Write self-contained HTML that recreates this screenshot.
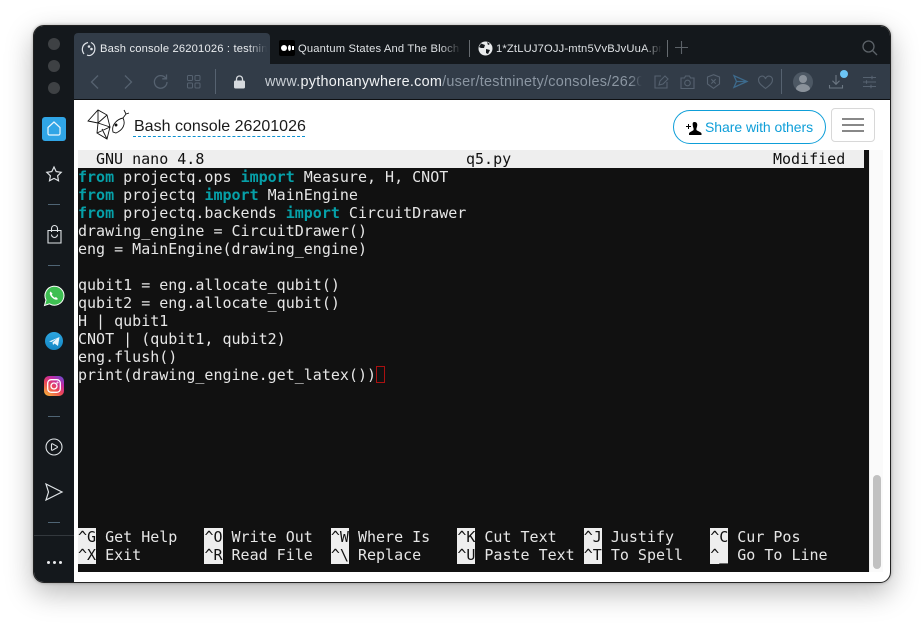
<!DOCTYPE html>
<html><head><meta charset="utf-8">
<style>
html,body{margin:0;padding:0;width:924px;height:624px;overflow:hidden;background:#fff;}
*{box-sizing:border-box;}
.abs,.t,.l{position:absolute;}
#win{position:absolute;left:33px;top:25px;width:858px;height:558px;border-radius:11px;background:#fff;overflow:hidden;box-shadow:0 10px 28px rgba(0,0,0,.28),0 0 3px rgba(0,0,0,.3);border:1px solid #222;}
.s{font-family:"Liberation Sans",sans-serif;white-space:nowrap;}
.tab{font-size:11.2px;line-height:16px;letter-spacing:.17px;overflow:hidden;}
#term{position:absolute;left:78px;top:150px;width:791px;height:422px;background:#111111;overflow:hidden;}
.l{left:0;font:15px/18px "DejaVu Sans Mono",monospace;color:#e6e6e6;white-space:pre;height:18px;}
.l b{color:#06a0a8;font-weight:bold;}
.l i{font-style:normal;background:#eeeeee;color:#111;}
svg{position:absolute;overflow:visible;}
</style></head><body>
<div id="win"></div>
<!-- sidebar -->
<div class="abs" style="left:34px;top:26px;width:40px;height:556px;background:#14181c;border-radius:10px 0 0 10px;"></div>
<div class="abs" style="left:34px;top:26px;width:856px;height:38px;background:#14181c;border-radius:10px 10px 0 0;"></div>
<div class="abs" style="left:48px;top:38px;width:12px;height:12px;border-radius:50%;background:#3e4144;"></div>
<div class="abs" style="left:48px;top:60px;width:12px;height:12px;border-radius:50%;background:#3e4144;"></div>
<div class="abs" style="left:48px;top:82px;width:12px;height:12px;border-radius:50%;background:#3e4144;"></div>
<!-- tab -->
<div class="abs" style="left:74px;top:33px;width:196px;height:31px;background:#323c48;border-radius:4px 4px 0 0;"></div>
<div class="abs" style="left:74px;top:64px;width:816px;height:35px;background:#323c48;"></div>
<div class="abs" style="left:74px;top:99px;width:816px;height:1px;background:#0d0f12;"></div>
<svg style="left:81px;top:41px" width="16" height="16" viewBox="0 0 16 16" fill="none" stroke="#dfe3e8" stroke-width="1.2"><path d="M3 13C0 9 1 3 7 1.500"/><path d="M10 1.500c5 2 5 9 1 12-2 1.500-4 1-5 .5"/><circle cx="8" cy="5.500" r=".7" fill="#dfe3e8"/><circle cx="10.500" cy="8" r=".7" fill="#dfe3e8"/></svg>
<div class="abs s tab" style="left:100px;top:41px;width:168px;color:#e9ecef;-webkit-mask-image:linear-gradient(90deg,#000 148px,transparent 167px);">Bash console 26201026 : testninety</div>
<div class="abs" style="left:279px;top:40px;width:16px;height:16px;background:#000;border-radius:2px;"></div>
<div class="abs" style="left:281px;top:45px;width:6px;height:6px;background:#fff;border-radius:50%;"></div>
<div class="abs" style="left:288px;top:45px;width:3px;height:6px;background:#fff;border-radius:50%;"></div>
<div class="abs" style="left:292px;top:46px;width:1.500px;height:4px;background:#fff;"></div>
<div class="abs s tab" style="left:298px;top:41px;width:164px;color:#dfe2e5;-webkit-mask-image:linear-gradient(90deg,#000 142px,transparent 163px);">Quantum States And The Bloch Sphere</div>
<div class="abs" style="left:469px;top:40px;width:1px;height:17px;background:#666b70;"></div>
<svg style="left:478px;top:41px" width="15" height="15" viewBox="0 0 15 15"><circle cx="7.500" cy="7.500" r="7" fill="#e8eaec"/><path d="M3 2.500 7 4 6 7 3 7 1 6zM8 8l4 1-2 4-2-1zM9 1l3 2-2 1z" fill="#14181c"/></svg>
<div class="abs s tab" style="left:496px;top:41px;width:166px;color:#dfe2e5;-webkit-mask-image:linear-gradient(90deg,#000 148px,transparent 166px);">1*ZtLUJ7OJJ-mtn5VvBJvUuA.png</div>
<div class="abs" style="left:667px;top:40px;width:1px;height:17px;background:#666b70;"></div>
<svg style="left:675px;top:41px" width="13" height="13" fill="none" stroke="#5c6268" stroke-width="1.100"><path d="M6.500 0v13M0 6.500h13"/></svg>
<svg style="left:862px;top:40px" width="16" height="16" fill="none" stroke="#5c6268" stroke-width="1.300"><circle cx="6.500" cy="6.500" r="5.500"/><path d="M10.500 10.500 15 15"/></svg>
<!-- toolbar -->
<svg style="left:90px;top:75px" width="11" height="14" fill="none" stroke="#566270" stroke-width="1.300"><path d="M8 .5 1.500 7 8 13.500"/></svg>
<svg style="left:123px;top:75px" width="11" height="14" fill="none" stroke="#566270" stroke-width="1.300"><path d="M2 .5 8.500 7 2 13.500"/></svg>
<svg style="left:153px;top:74px" width="15" height="15" fill="none" stroke="#566270" stroke-width="1.300"><path d="M13 4.500A6.300 6.300 0 1 0 14 8"/><path d="M13.500.5v4.300H9.300"/></svg>
<svg style="left:187px;top:75px" width="14" height="14" fill="none" stroke="#566270" stroke-width="1"><rect x=".5" y=".5" width="5" height="5" rx="1"/><rect x="8" y=".5" width="5" height="5" rx="1"/><rect x=".5" y="8" width="5" height="5" rx="1"/><rect x="8" y="8" width="5" height="5" rx="1"/></svg>
<div class="abs" style="left:215px;top:69px;width:1px;height:25px;background:#566270;"></div>
<svg style="left:234px;top:75px" width="11" height="14"><path d="M2.500 6V4a3 3 0 0 1 6 0v2" fill="none" stroke="#d6dade" stroke-width="1.300"/><rect y="5.500" width="11" height="8" rx="1.500" fill="#d6dade"/></svg>
<div class="abs s" style="left:265px;top:73px;width:377px;overflow:hidden;font-size:14.400px;letter-spacing:.27px;line-height:18px;color:#8b96a2;-webkit-mask-image:linear-gradient(90deg,#000 365px,transparent 377px);"><span style="color:#c8ced4">www.</span><span style="color:#f0f2f4">pythonanywhere.com</span>/user/testninety/consoles/26201026</div>
<svg style="left:654px;top:74px" width="15" height="15" fill="none" stroke="#566270" stroke-width="1.100"><path d="M7 2H1v12h12V8"/><path d="M5 11l1-4 5-5 3 3-5 5z"/></svg>
<svg style="left:680px;top:75px" width="15" height="14" fill="none" stroke="#566270" stroke-width="1.100"><path d="M1 3h3.500l1-2h4l1 2H14v10.500H1z"/><circle cx="7.500" cy="8" r="2.800"/></svg>
<svg style="left:707px;top:74px" width="13" height="15" fill="none" stroke="#566270" stroke-width="1.100"><path d="M6.500.7 12.500 3v7l-6 4.300L.5 10V3z"/><path d="M4.300 5.200 8.700 9.600M8.700 5.200 4.300 9.600"/></svg>
<svg style="left:733px;top:75px" width="15" height="13" fill="none" stroke="#3d6a8c" stroke-width="1.300"><path d="M1 .7 14 6.500 1 12.300 3.500 6.500zM3.500 6.500H14"/></svg>
<svg style="left:758px;top:76px" width="15" height="13" fill="none" stroke="#566270" stroke-width="1.100"><path d="M7.500 12.500C3 9 .6 7 .6 4.200A3.500 3.500 0 0 1 7.500 3a3.500 3.500 0 0 1 6.900 1.200C14.400 7 12 9 7.500 12.500z"/></svg>
<div class="abs" style="left:781px;top:69px;width:1px;height:25px;background:#566270;"></div>
<div class="abs" style="left:793px;top:72px;width:20px;height:20px;border-radius:50%;background:#4d5864;overflow:hidden;">
 <div class="abs" style="left:6px;top:3px;width:8px;height:8px;border-radius:50%;background:#8a929b;"></div>
 <div class="abs" style="left:3px;top:12px;width:14px;height:10px;border-radius:50%;background:#8a929b;"></div>
</div>
<svg style="left:829px;top:75px" width="14" height="14" fill="none" stroke="#6c7783" stroke-width="1.100"><path d="M7 0v9M3.500 5.700 7 9.300l3.500-3.600M.5 10v3h13v-3"/></svg>
<div class="abs" style="left:840px;top:70px;width:8px;height:8px;border-radius:50%;background:#6cc5f5;"></div>
<svg style="left:863px;top:75px" width="13" height="14" fill="none" stroke="#566270" stroke-width="1.100"><path d="M0 2.500h13M0 7h13M0 11.500h13M9 .7v3.600M3.500 5.200v3.600M8 9.700v3.600"/></svg>
<!-- sidebar icons -->
<div class="abs" style="left:42px;top:117px;width:24px;height:24px;border-radius:3px;background:#30a5e6;"></div>
<svg style="left:47px;top:121px" width="14" height="15" fill="none" stroke="#eaf6fd" stroke-width="1.200"><path d="M1 6.500 7 1l6 5.500V12.500a1.500 1.500 0 0 1-1.500 1.500h-9A1.500 1.500 0 0 1 1 12.500z"/></svg>
<svg style="left:46px;top:166px" width="16" height="16" fill="none" stroke="#dfe3e6" stroke-width="1.200"><path d="M8 1l2.200 4.600 5 .7-3.600 3.500.9 5L8 12.400 3.500 14.800l.9-5L.8 6.300l5-.7z"/></svg>
<div class="abs" style="left:48px;top:204px;width:12px;height:1px;background:#4f6474;"></div>
<svg style="left:47px;top:226px" width="15" height="18" fill="none" stroke="#dfe3e6" stroke-width="1.100"><path d="M1 4.500h13V17H1z"/><path d="M4.500 6V2.500a3 3 0 0 1 6 0V6"/><path d="M4.500 8.500a3 3 0 0 0 6 0"/></svg>
<div class="abs" style="left:48px;top:265px;width:12px;height:1px;background:#4f6474;"></div>
<svg style="left:44px;top:286px" width="20" height="20"><path d="M.5 19.500 2 14A9.500 9.500 0 1 1 5.500 17.800z" fill="#3ebf52" stroke="#fff" stroke-width="1"/><path d="M6.500 5.500c-1.500 1.500-.5 4 1.500 6s4.500 3 6 1.500l-2-2-1.200.7c-1-.5-2.500-2-3-3L8.500 7.500z" fill="#fff"/></svg>
<div class="abs" style="left:45px;top:332px;width:18px;height:18px;border-radius:50%;background:linear-gradient(#2ea6e0,#1386c4);"></div>
<svg style="left:49px;top:337px" width="11" height="9"><path d="M0 4.500 10.500 0 9 9 5.500 6.500 4 8 3.500 5.500 8 1.500 2.500 5z" fill="#e8f4fb"/></svg>
<div class="abs" style="left:44px;top:376px;width:20px;height:20px;border-radius:5px;background:linear-gradient(35deg,#f9b13a 5%,#e9435a 45%,#c32aa3 70%,#5b51d8);"></div>
<svg style="left:47px;top:379px" width="14" height="14" fill="none" stroke="#fff" stroke-width="1.300"><rect x=".7" y=".7" width="12.600" height="12.600" rx="3.500"/><circle cx="7" cy="7" r="3"/><circle cx="10.500" cy="3.500" r=".4"/></svg>
<div class="abs" style="left:48px;top:416px;width:12px;height:1px;background:#4f6474;"></div>
<svg style="left:45px;top:438px" width="18" height="18" fill="none" stroke="#dfe3e6" stroke-width="1.100"><circle cx="9" cy="9" r="8"/><path d="M6.500 6.500c0-.7.500-1 1-.7l4.500 2.500c.6.400.6 1 0 1.400L7.500 12.200c-.5.300-1 0-1-.7z"/></svg>
<svg style="left:45px;top:483px" width="18" height="18" fill="none" stroke="#dfe3e6" stroke-width="1.200"><path d="M1 1 17 9 1 17 3.500 9z"/></svg>
<div class="abs" style="left:48px;top:522px;width:12px;height:1px;background:#4f6474;"></div>
<div class="abs" style="left:34px;top:535px;width:40px;height:1px;background:#33383d;"></div>
<div class="abs" style="left:47px;top:561px;width:3px;height:3px;border-radius:50%;background:#e8eaec;"></div>
<div class="abs" style="left:53px;top:561px;width:3px;height:3px;border-radius:50%;background:#e8eaec;"></div>
<div class="abs" style="left:59px;top:561px;width:3px;height:3px;border-radius:50%;background:#e8eaec;"></div>
<!-- page header -->
<svg style="left:88px;top:108px" width="42" height="32" viewBox="0 0 42 32" fill="none" stroke="#111" stroke-width=".9"><path d="M0 13 10 2l9 5 3 12-3 12-10-6 1-10zM10 2l0 13M10 15 19 7M10 15 22 19M22 19 9 25M10 15 0 13M9 25 19 31M14 21l5 10"/><path d="M25 24C23 16 30 11 35 10 38 16 35 22 28 25zM35 10l3-4M38 6l-2-4M38 6l3-1"/><circle cx="28" cy="17" r="1" fill="#111"/></svg>
<div class="abs s" style="left:134px;top:117px;font-size:16px;line-height:20px;color:#1a1a1a;letter-spacing:.01px;">Bash console 26201026</div>
<div class="abs" style="left:133px;top:136px;width:172px;border-top:1px dashed #0a90d0;"></div>
<div class="abs" style="left:673px;top:110px;width:153px;height:34px;border:1px solid #0e9ed8;border-radius:17px;background:#fff;"></div>
<svg style="left:686px;top:122px" width="16" height="13"><path d="M8.500 0c2 0 3 1.500 2.700 3.500C11 5.500 10 6.500 10.500 8c.5 1 5 2 5 3.500V13H3v-1.500c0-1.500 4-2.500 4.500-3.500.5-1.500-.5-2.500-.7-4.500C6.500 1.500 6.500 0 8.500 0z" fill="#000"/><path d="M0 4.500h5M2.500 2v5" stroke="#000" stroke-width="1"/></svg>
<div class="abs s" style="left:705px;top:118px;font-size:14px;line-height:18px;color:#0e9ed8;letter-spacing:-.05px;">Share with others</div>
<div class="abs" style="left:831px;top:108px;width:44px;height:34px;border:1px solid #d8d8d8;border-radius:4px;background:#fff;"></div>
<div class="abs" style="left:842px;top:118px;width:22px;height:2px;background:#888;"></div>
<div class="abs" style="left:842px;top:124px;width:22px;height:2px;background:#888;"></div>
<div class="abs" style="left:842px;top:130px;width:22px;height:2px;background:#888;"></div>
<!-- terminal -->
<div id="term">
<div class="abs" style="left:0;top:0;width:786px;height:18px;background:#eeeeee;"></div>
<div class="l" style="top:0;color:#111"><span style="position:absolute;left:18px">GNU nano 4.8</span><span style="position:absolute;left:388px">q5.py</span><span style="position:absolute;left:695px">Modified</span></div>
<div class="l" style="top:18px"><b>from</b> projectq.ops <b>import</b> Measure, H, CNOT</div>
<div class="l" style="top:36px"><b>from</b> projectq <b>import</b> MainEngine</div>
<div class="l" style="top:54px"><b>from</b> projectq.backends <b>import</b> CircuitDrawer</div>
<div class="l" style="top:72px">drawing_engine = CircuitDrawer()</div>
<div class="l" style="top:90px">eng = MainEngine(drawing_engine)</div>
<div class="l" style="top:126px">qubit1 = eng.allocate_qubit()</div>
<div class="l" style="top:144px">qubit2 = eng.allocate_qubit()</div>
<div class="l" style="top:162px">H | qubit1</div>
<div class="l" style="top:180px">CNOT | (qubit1, qubit2)</div>
<div class="l" style="top:198px">eng.flush()</div>
<div class="l" style="top:216px">print(drawing_engine.get_latex())</div>
<div class="abs" style="left:298px;top:216px;width:9px;height:17px;border:1px solid #a11;"></div>
<div class="l" style="top:378px"><i>^G</i> Get Help   <i>^O</i> Write Out  <i>^W</i> Where Is   <i>^K</i> Cut Text   <i>^J</i> Justify    <i>^C</i> Cur Pos</div>
<div class="l" style="top:396px"><i>^X</i> Exit       <i>^R</i> Read File  <i>^\</i> Replace    <i>^U</i> Paste Text <i>^T</i> To Spell   <i>^_</i> Go To Line</div>
</div>
<!-- scrollbar -->
<div class="abs" style="left:869px;top:150px;width:14px;height:422px;background:#fafafa;border-left:1px solid #eee;"></div>
<div class="abs" style="left:873px;top:475px;width:8px;height:94px;border-radius:4px;background:#c1c1c1;"></div>
</body></html>
